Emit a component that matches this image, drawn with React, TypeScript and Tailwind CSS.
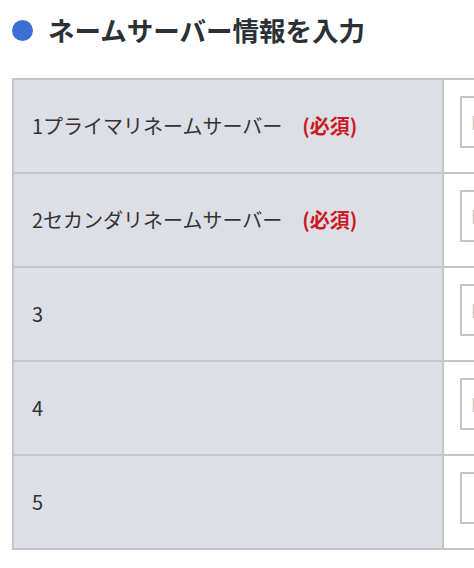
const rows = [
  { label: "1プライマリネームサーバー", required: true, placeholder: "Hostname" },
  { label: "2セカンダリネームサーバー", required: true, placeholder: "Hostname" },
  { label: "3", required: false, placeholder: "Hostname" },
  { label: "4", required: false, placeholder: "Hostname" },
  { label: "5", required: false, placeholder: "" },
];

export default function App() {
  return (
    <div
      className="h-[568px] w-[474px] overflow-hidden bg-white text-[#333]"
      style={{ fontFamily: '"Noto Sans CJK JP", "Noto Sans", sans-serif' }}
    >
      {/* Section heading */}
      <div className="flex h-[60px] items-center gap-[15px] px-3">
        <span className="h-[21px] w-[21px] shrink-0 rounded-full bg-[#3b6fd6]" />
        <h2 className="text-[26.5px] leading-none font-bold text-[#2b3036]">
          ネームサーバー情報を入力
        </h2>
      </div>

      {/* Name server table */}
      <div className="mt-[18px] ml-3 w-[700px] border-2 border-[#c3c5c9]">
        {rows.map((row, i) => (
          <div
            key={row.label}
            className={`flex ${i < rows.length - 1 ? "h-[94px] border-b-2 border-[#c3c5c9]" : "h-[92px]"}`}
          >
            <div className="flex w-[430px] shrink-0 items-center border-r-2 border-[#c3c5c9] bg-[#dcdfe6] pl-[18px] text-[20px]">
              <span>{row.label}</span>
              {row.required && (
                <span className="ml-[20px] font-semibold text-[20px] text-[#cc1a24]">(必須)</span>
              )}
            </div>
            <div className="flex-1 bg-white pt-4 pl-4">
              <input
                type="text"
                placeholder={row.placeholder}
                className="h-[52px] w-[240px] border-2 border-[#c3c5c9] px-[9px] text-[18px] placeholder:text-[#c4c4c4] outline-none"
              />
            </div>
          </div>
        ))}
      </div>
    </div>
  );
}
